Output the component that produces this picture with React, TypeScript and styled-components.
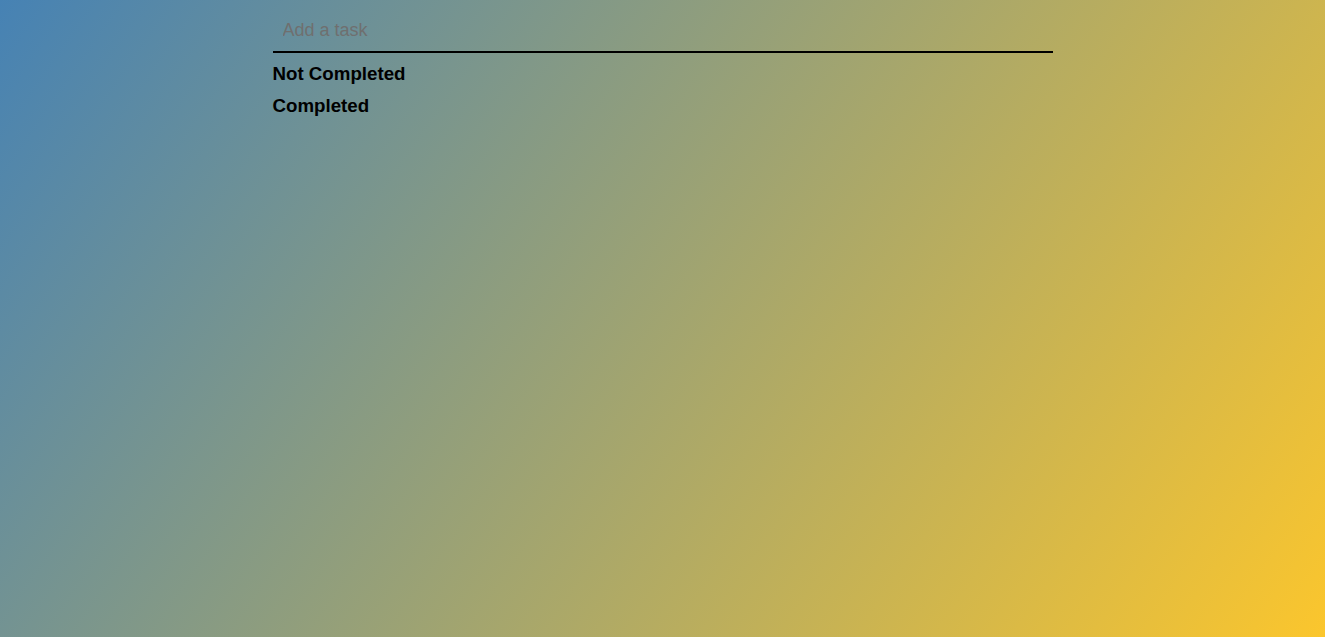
import React, { useState } from "react";
import styled, { createGlobalStyle } from "styled-components";

const Global = createGlobalStyle`
  html, body {
    min-height: 100%;
  }
  body {
    margin: 8px;
    min-height: 100vh;
    font-family: "Liberation Sans", Arial, sans-serif;
    background: linear-gradient(125deg, #4682b4, #fbc62d);
    background-attachment: fixed;
  }
`;

const Container = styled.div`
  width: 780px;
  margin: 0 auto;
  padding-top: 2px;
  display: flex;
  flex-direction: column;
  gap: 10px;
`;

const TaskInput = styled.input`
  display: block;
  width: 100%;
  box-sizing: border-box;
  font-family: "Liberation Sans", Arial, sans-serif;
  font-size: 18px;
  line-height: 21px;
  padding: 10px 10px;
  border: none;
  border-bottom: 2px solid #000;
  background: transparent;
  outline: none;
  color: #000;
  &::placeholder {
    color: #6f6f6f;
  }
`;

const SectionTitle = styled.h3`
  font-size: 18.72px;
  line-height: 22px;
  font-weight: bold;
  color: #000;
  margin: 0;
`;

export default function App() {
  const [value, setValue] = useState("");
  return (
    <>
      <Global />
      <Container>
        <TaskInput
          placeholder="Add a task"
          value={value}
          onChange={(e) => setValue(e.target.value)}
        />
        <SectionTitle>Not Completed</SectionTitle>
        <SectionTitle>Completed</SectionTitle>
      </Container>
    </>
  );
}
